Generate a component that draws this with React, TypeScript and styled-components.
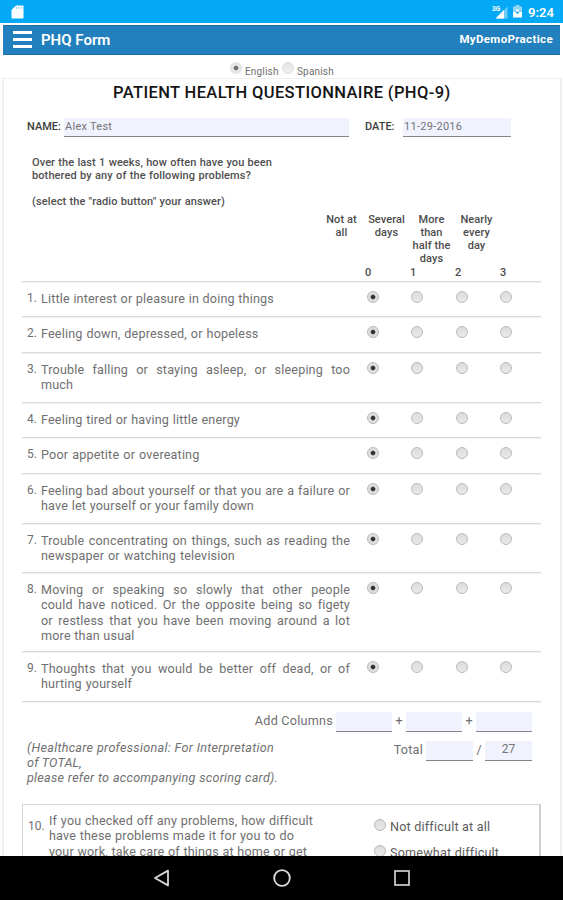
import React from 'react';
import styled, { createGlobalStyle } from 'styled-components';

const GlobalStyle = createGlobalStyle`
  * { box-sizing: border-box; }
  body { margin: 0; background: #fff; font-family: Roboto, "Liberation Sans", sans-serif; }
`;

const Screen = styled.div`
  width: 563px;
  height: 900px;
  display: flex;
  flex-direction: column;
  overflow: hidden;
  background: #fff;
  color: #707070;
`;

const StatusBar = styled.div`
  flex: none;
  height: 23px;
  background: #03a9f4;
  display: flex;
  align-items: center;
  padding: 0 8px 0 11px;
  color: #fff;
`;

const StatusIcons = styled.div`
  margin-left: auto;
  display: flex;
  align-items: center;
  height: 23px;
`;

const SignalIcon = styled.svg`
  margin-right: 3px;
`;

const Clock = styled.span`
  font-size: 13px;
  font-weight: 600;
  margin: 1px 0 0 5px;
  width: 27px;
  white-space: nowrap;
`;

const AppBar = styled.header`
  flex: none;
  height: 30px;
  margin: 2px 3px 0 3px;
  background: #2180bd;
  border-top: 1px solid #1b6ea6;
  border-bottom: 1px solid #1b6ea6;
  display: flex;
  align-items: center;
  padding: 0 7px 0 10px;
  color: #fff;
`;

const Burger = styled.div`
  width: 19px;
  display: grid;
  gap: 4px;
  margin: -1px 9px 0 0;
`;

const BurgerBar = styled.i`
  height: 3.3px;
  background: #fff;
`;

const AppTitle = styled.h1`
  margin: 0;
  font-size: 15px;
  font-weight: 600;
`;

const Practice = styled.span`
  margin-left: auto;
  margin-top: -2px;
  font-size: 11.5px;
  font-weight: 700;
  letter-spacing: 0.35px;
`;

const LanguageBar = styled.div`
  flex: none;
  height: 23px;
  display: flex;
  padding: 7px 0 0 230px;
  font-size: 10px;
  line-height: 19px;
`;

const LanguageLabel = styled.label<{ $w: number }>`
  width: ${p => p.$w}px;
  padding-left: 3px;
  white-space: nowrap;
  letter-spacing: 0.18px;
`;

const RadioDot = styled.span<{ $on?: boolean; $pale?: boolean }>`
  flex: none;
  display: block;
  width: 12px;
  height: 12px;
  border-radius: 50%;
  border: 1px solid ${p => (p.$pale ? '#d0d0d0' : '#bababa')};
  opacity: ${p => (p.$pale ? 0.7 : 1)};
  background: ${p =>
    p.$on
      ? 'radial-gradient(circle, #333 0 1.6px, #dedede 2.9px)'
      : 'linear-gradient(#dcdcdc, #e9e9e9)'};
`;

const Sheet = styled.main`
  flex: 1;
  min-height: 0;
  overflow: hidden;
  margin: 0 1px 0 2px;
  border: solid #efefef;
  border-width: 1px 2px 0 2px;
  padding: 0 19px 0 18px;
`;

const Heading = styled.h2`
  margin: 4px 0 0 91px;
  font-size: 16.5px;
  line-height: 20px;
  font-weight: 500;
  color: #151515;
  letter-spacing: 0.38px;
  white-space: nowrap;
`;

const Identity = styled.div`
  display: flex;
  align-items: flex-start;
  margin-top: 15px;
  padding-left: 5px;
  font-size: 11px;
  line-height: 17px;
`;

const FieldLabel = styled.span<{ $w: number; $indent?: number }>`
  width: ${p => p.$w}px;
  padding-left: ${p => p.$indent ?? 0}px;
  color: #3c3c3c;
  white-space: nowrap;
  font-weight: 500;
  font-size: 11px;
`;

const Field = styled.span<{ $w: number; $h?: number; $center?: boolean }>`
  flex: none;
  width: ${p => p.$w}px;
  height: ${p => p.$h ?? 19}px;
  background: #f0f2fe;
  border-bottom: 1px solid #84848f;
  text-align: ${p => (p.$center ? 'center' : 'left')};
  letter-spacing: ${p => (p.$center ? 0 : 0.27)}px;
  font-size: ${p => (p.$center ? 12 : 11)}px;
  padding-left: ${p => (p.$center ? 0 : 1)}px;
  color: #747474;
`;

const Intro = styled.section`
  margin: 19px 0 0 10px;
  height: 57px;
  font-size: 11px;
  line-height: 13.1px;
  font-weight: 500;
  color: #505050;
`;

const TextLine = styled.div<{ $w?: number; $ls?: number }>`
  width: ${p => (p.$w ? `${p.$w}px` : 'auto')};
  text-align-last: ${p => (p.$w ? 'justify' : 'left')};
  letter-spacing: ${p => p.$ls ?? 0}px;
  white-space: nowrap;
`;

const Gap = styled.div`
  height: 13.1px;
`;

const ScaleHead = styled.div`
  display: grid;
  grid-template-columns: 45px 45px 45px 45px;
  margin: 0 0 0 297px;
  height: 53px;
  font-size: 11px;
  line-height: 13.1px;
  font-weight: 500;
  color: #4c4c4c;
  text-align: center;
`;

const ScaleCell = styled.div`
  white-space: pre;
  letter-spacing: 0.08px;
`;

const ScaleNumbers = styled.div`
  display: grid;
  grid-template-columns: 45px 45px 45px 45px;
  margin-left: 343px;
  height: 15px;
  font-size: 11px;
  line-height: 14px;
  font-weight: 500;
  color: #4c4c4c;
`;

const Question = styled.div<{ $h: number }>`
  height: ${p => p.$h}px;
  border-top: 1px solid #dadada;
  box-shadow: inset 0 1px 0 #f1f1f1;
  display: flex;
  align-items: flex-start;
  padding: 9px 0 0 5px;
  font-size: 12.6px;
  line-height: 15.3px;
`;

const QNumber = styled.span`
  width: 14px;
  font-size: 12px;
`;

const QText = styled.div`
  width: 326px;
`;

const Choices = styled.div`
  display: grid;
  grid-template-columns: 44.4px 44.4px 44.4px 12px;
`;

const Totals = styled.section`
  height: 103px;
  border-top: 1px solid #dadada;
  box-shadow: inset 0 1px 0 #f1f1f1;
  padding: 10px 9px 0 5px;
  font-size: 12.6px;
  line-height: 17px;
`;

const SumRow = styled.div`
  display: flex;
  justify-content: flex-end;
  line-height: 17px;
`;

const SumLabel = styled.span`
  padding-right: 3px;
  letter-spacing: 0.25px;
`;

const Operator = styled.span<{ $w: number }>`
  width: ${p => p.$w}px;
  text-align: center;
`;

const TotalRow = styled.div`
  display: flex;
  justify-content: space-between;
  margin-top: 9px;
`;

const Note = styled.div`
  font-style: italic;
  line-height: 15.2px;
  margin-top: -1px;
`;

const Difficulty = styled.section`
  height: 130px;
  border: 1px solid #d6d6d6;
  border-right: 2px solid #cfcfcf;
  display: flex;
  padding: 8px 0 0 5px;
  font-size: 12.6px;
  line-height: 15.3px;
`;

const TenNumber = styled.span`
  width: 21px;
  padding-top: 6px;
  font-size: 12px;
`;

const TenText = styled.div`
  width: 325px;
`;

const Option = styled.div`
  display: flex;
  height: 25.5px;
  padding-top: 6px;
`;

const OptionText = styled.span`
  padding: 0 0 0 4px;
  letter-spacing: 0.2px;
  white-space: nowrap;
  color: #5c5c5c;
`;

const NavBar = styled.nav`
  flex: none;
  height: 44px;
  background: #000;
  display: flex;
  justify-content: center;
  align-items: center;
  gap: 100px;
`;

type Line = [string, number];
const questions: { h: number; lines: Line[] }[] = [
  { h: 35, lines: [['Little interest or pleasure in doing things', 233]] },
  { h: 36, lines: [['Feeling down, depressed, or hopeless', 217.5]] },
  { h: 50, lines: [['Trouble falling or staying asleep, or sleeping too', 309], ['much', 0]] },
  { h: 35, lines: [['Feeling tired or having little energy', 199]] },
  { h: 36, lines: [['Poor appetite or overeating', 158.5]] },
  { h: 50, lines: [['Feeling bad about yourself or that you are a failure or', 309], ['have let yourself or your family down', 213]] },
  { h: 49, lines: [['Trouble concentrating on things, such as reading the', 309], ['newspaper or watching television', 194]] },
  {
    h: 79,
    lines: [
      ['Moving or speaking so slowly that other people', 309],
      ['could have noticed. Or the opposite being so figety', 309],
      ['or restless that you have been moving around a lot', 309],
      ['more than usual', 93.5],
    ],
  },
  { h: 50, lines: [['Thoughts that you would be better off dead, or of', 309], ['hurting yourself', 91]] },
];

const scale = ['Not at\nall', 'Several\ndays', 'More\nthan\nhalf the\ndays', 'Nearly\nevery\nday'];

export default function App() {
  return (
    <>
      <GlobalStyle />
      <Screen>
        <StatusBar>
          <svg width="13" height="14" viewBox="0 0 13 14">
            <path d="M5 0.5h6.5q1 0 1 1v11q0 1-1 1h-10q-1 0-1-1V5z" fill="#fff" />
            <path d="M5.6 2v2M7.8 2v2M10 2v2" stroke="#8fd2f5" strokeWidth="1" />
          </svg>
          <StatusIcons>
            <SignalIcon width="17" height="16" viewBox="0 0 17 16">
              <text x="0" y="7" fontSize="6.5" fontWeight="700" fill="#fff" fontFamily="Roboto, sans-serif">3G</text>
              <path d="M15.5 2.5v12H3.5z" fill="#6ccaf7" />
              <path d="M12 6v8.5H3.5z" fill="#fff" />
            </SignalIcon>
            <svg width="11" height="15" viewBox="0 0 11 15">
              <path d="M3.5 1h4v1.4H10V8H1V2.4h2.5z" fill="#8fd6f9" />
              <path d="M1 8h2.5L5.5 10 7.5 8H10v5.5H1z" fill="#fff" />
              <path d="M3.5 5.5h4L5.5 8z" fill="#fff" />
            </svg>
            <Clock>9:24</Clock>
          </StatusIcons>
        </StatusBar>
        <AppBar>
          <Burger><BurgerBar /><BurgerBar /><BurgerBar /></Burger>
          <AppTitle>PHQ Form</AppTitle>
          <Practice>MyDemoPractice</Practice>
        </AppBar>
        <LanguageBar>
          <RadioDot $on $pale />
          <LanguageLabel $w={40}>English</LanguageLabel>
          <RadioDot $pale />
          <LanguageLabel $w={50}>Spanish</LanguageLabel>
        </LanguageBar>
        <Sheet>
          <Heading>PATIENT HEALTH QUESTIONNAIRE (PHQ-9)</Heading>
          <Identity>
            <FieldLabel $w={37}>NAME:</FieldLabel>
            <Field $w={285}>Alex Test</Field>
            <FieldLabel $w={54} $indent={16}>DATE:</FieldLabel>
            <Field $w={108}>11-29-2016</Field>
          </Identity>
          <Intro>
            <TextLine $w={240} $ls={0.08}>Over the last 1 weeks, how often have you been</TextLine>
            <TextLine $w={219} $ls={0.1}>bothered by any of the following problems?</TextLine>
            <Gap />
            <TextLine $w={193} $ls={0.12}>(select the "radio button" your answer)</TextLine>
          </Intro>
          <ScaleHead>
            {scale.map(s => <ScaleCell key={s}>{s}</ScaleCell>)}
          </ScaleHead>
          <ScaleNumbers>
            {[0, 1, 2, 3].map(n => <span key={n}>{n}</span>)}
          </ScaleNumbers>
          {questions.map((q, i) => (
            <Question key={i} $h={q.h}>
              <QNumber>{i + 1}.</QNumber>
              <QText>
                {q.lines.map(([text, w]) => (
                  <TextLine key={text} $w={w} $ls={0.17}>{text}</TextLine>
                ))}
              </QText>
              <Choices>
                <RadioDot $on /><RadioDot /><RadioDot /><RadioDot />
              </Choices>
            </Question>
          ))}
          <Totals>
            <SumRow>
              <SumLabel>Add Columns</SumLabel>
              <Field $w={56} $h={20} />
              <Operator $w={14}>+</Operator>
              <Field $w={56} $h={20} />
              <Operator $w={14}>+</Operator>
              <Field $w={56} $h={20} />
            </SumRow>
            <TotalRow>
              <Note>
                <TextLine $w={247} $ls={0.28}>(Healthcare professional: For Interpretation</TextLine>
                <TextLine $ls={0.2}>of TOTAL,</TextLine>
                <TextLine $w={251} $ls={0.25}>please refer to accompanying scoring card).</TextLine>
              </Note>
              <SumRow>
                <SumLabel>Total</SumLabel>
                <Field $w={47} $h={20} />
                <Operator $w={12}>/</Operator>
                <Field $w={47} $h={20} $center>27</Field>
              </SumRow>
            </TotalRow>
          </Totals>
          <Difficulty>
            <TenNumber>10.</TenNumber>
            <TenText>
              <TextLine $w={264} $ls={0.15}>If you checked off any problems, how difficult</TextLine>
              <TextLine $w={245} $ls={0.15}>have these problems made it for you to do</TextLine>
              <TextLine $w={258} $ls={0.15}>your work, take care of things at home or get</TextLine>
            </TenText>
            <div>
              <Option><RadioDot /><OptionText>Not difficult at all</OptionText></Option>
              <Option><RadioDot /><OptionText>Somewhat difficult</OptionText></Option>
            </div>
          </Difficulty>
        </Sheet>
        <NavBar>
          <svg width="20" height="20" viewBox="0 0 20 20">
            <path d="M16 2.6v14.8L3 10z" fill="none" stroke="#d8d8d8" strokeWidth="1.8" strokeLinejoin="round" />
          </svg>
          <svg width="20" height="20" viewBox="0 0 20 20">
            <circle cx="10" cy="10" r="7.8" fill="none" stroke="#dcdcdc" strokeWidth="1.8" />
          </svg>
          <svg width="20" height="20" viewBox="0 0 20 20">
            <rect x="3" y="3" width="14" height="14" fill="none" stroke="#d0d0d0" strokeWidth="1.7" />
          </svg>
        </NavBar>
      </Screen>
    </>
  );
}
